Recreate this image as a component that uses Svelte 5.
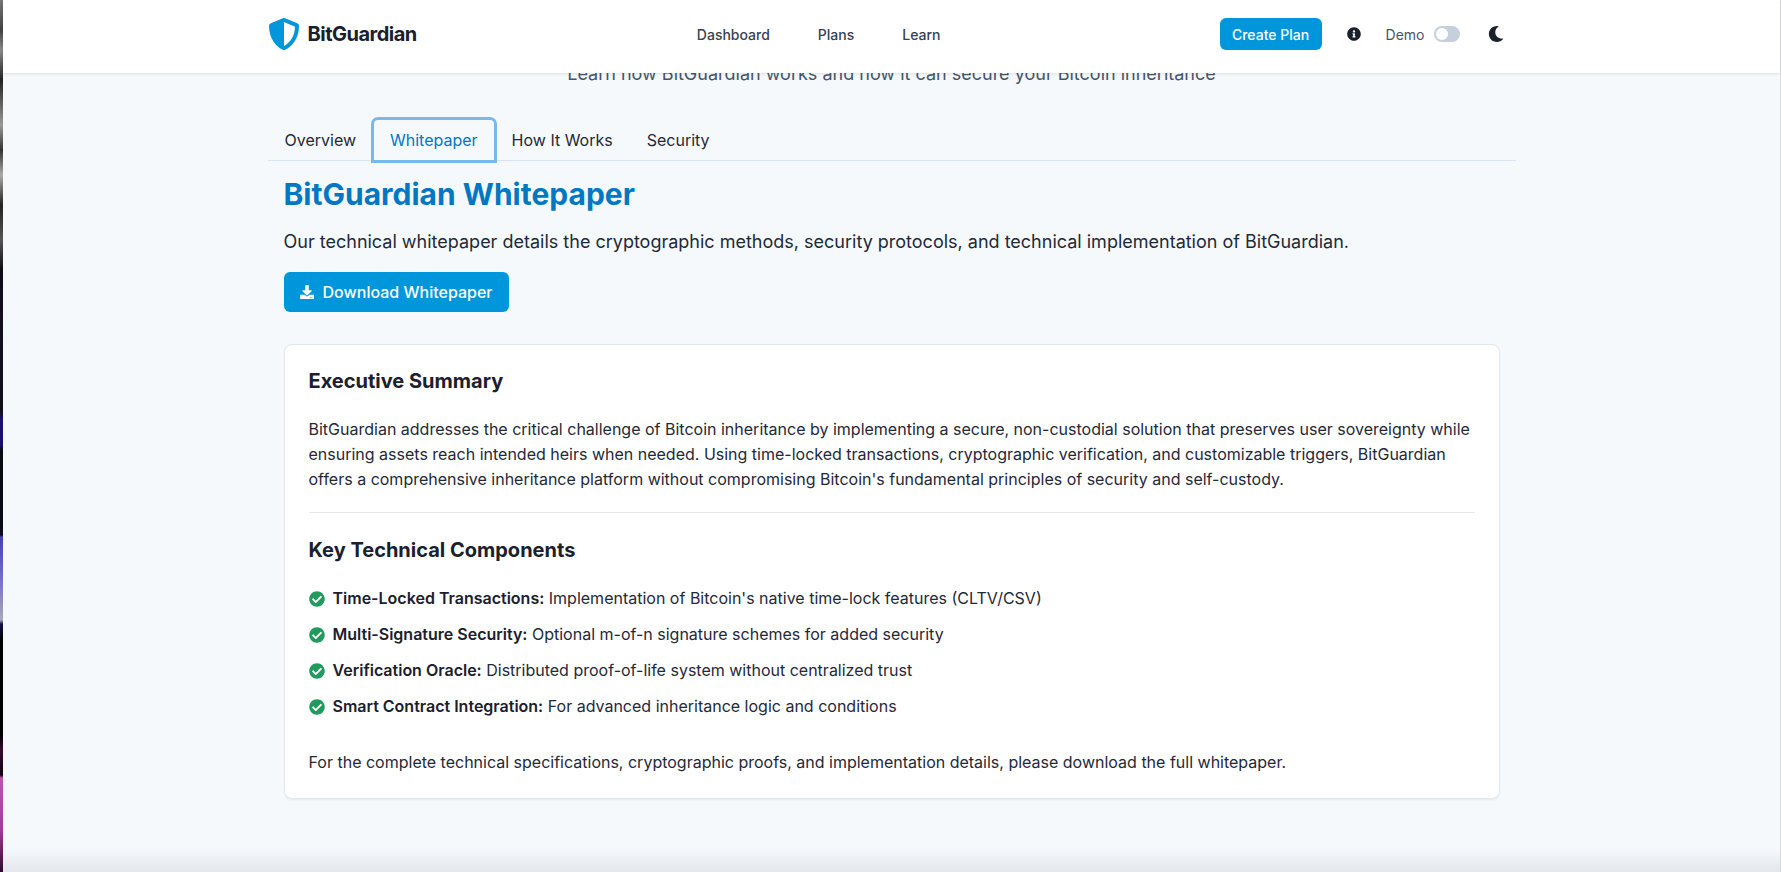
<script>
  const items = [
    ['Time-Locked Transactions:', "Implementation of Bitcoin's native time-lock features (CLTV/CSV)"],
    ['Multi-Signature Security:', 'Optional m-of-n signature schemes for added security'],
    ['Verification Oracle:', 'Distributed proof-of-life system without centralized trust'],
    ['Smart Contract Integration:', 'For advanced inheritance logic and conditions']
  ];
  const tabs = ['Overview', 'Whitepaper', 'How It Works', 'Security'];
</script>

<div class="window">
  <div class="desk-left"></div>
  <div class="page">
    <header>
      <div class="bar">
        <div class="brand">
          <svg class="shield" viewBox="0 0 512 512"><path d="M466.5 83.7l-192-80a48.15 48.15 0 0 0-36.9 0l-192 80C27.7 91.1 16 108.6 16 128c0 198.5 114.5 335.7 221.5 380.3 11.8 4.9 25.1 4.9 36.9 0C360.1 472.6 496 349.3 496 128c0-19.4-11.7-36.9-29.5-44.3zM256.1 446.3l-.1-381 175.9 73.3c-3.3 151.4-82.1 261.1-175.8 307.7z"/></svg>
          <span>BitGuardian</span>
        </div>
        <nav>
          <span>Dashboard</span>
          <span>Plans</span>
          <span>Learn</span>
        </nav>
        <div class="actions">
          <button class="create">Create Plan</button>
          <svg class="info" viewBox="0 0 512 512"><path d="M256 8C119.043 8 8 119.083 8 256c0 136.997 111.043 248 248 248s248-111.003 248-248C504 119.083 392.957 8 256 8zm0 110c23.196 0 42 18.804 42 42s-18.804 42-42 42-42-18.804-42-42 18.804-42 42-42zm56 254c0 6.627-5.373 12-12 12h-88c-6.627 0-12-5.373-12-12v-24c0-6.627 5.373-12 12-12h12v-64h-12c-6.627 0-12-5.373-12-12v-24c0-6.627 5.373-12 12-12h64c6.627 0 12 5.373 12 12v100h12c6.627 0 12 5.373 12 12v24z"/></svg>
          <div class="demo">
            <span>Demo</span>
            <span class="toggle"><span class="knob"></span></span>
          </div>
          <svg class="moon" viewBox="0 0 512 512"><path d="M283.211 512c78.962 0 151.079-35.925 198.857-94.792 7.068-8.708-.639-21.43-11.562-19.35-124.203 23.654-238.262-71.576-238.262-196.954 0-72.222 38.662-138.635 101.498-174.394 9.686-5.512 7.25-20.197-3.756-22.23A258.156 258.156 0 0 0 283.211 0c-141.309 0-256 114.511-256 256 0 141.309 114.511 256 256 256z"/></svg>
        </div>
      </div>
    </header>

    <main>
      <p class="lead">Learn how BitGuardian works and how it can secure your Bitcoin inheritance</p>
      <div class="tabs">
        {#each tabs as t, i}
          <button class="tab" class:active={i === 1}>{t}</button>
        {/each}
      </div>
      <section>
        <h1>BitGuardian Whitepaper</h1>
        <p class="intro">Our technical whitepaper details the cryptographic methods, security protocols, and technical implementation of BitGuardian.</p>
        <button class="download">
          <svg viewBox="0 0 512 512"><path d="M216 0h80c13.3 0 24 10.7 24 24v168h87.7c17.8 0 26.7 21.5 14.1 34.1L269.7 378.3c-7.5 7.5-19.8 7.5-27.3 0L90.1 226.1c-12.6-12.6-3.7-34.1 14.1-34.1H192V24c0-13.3 10.7-24 24-24zm296 376v112c0 13.3-10.7 24-24 24H24c-13.3 0-24-10.7-24-24V376c0-13.3 10.7-24 24-24h146.7l49 49c20.1 20.1 52.5 20.1 72.6 0l49-49H488c13.3 0 24 10.7 24 24zm-124 88c0-11-9-20-20-20s-20 9-20 20 9 20 20 20 20-9 20-20zm64 0c0-11-9-20-20-20s-20 9-20 20 9 20 20 20 20-9 20-20z"/></svg>
          <span>Download Whitepaper</span>
        </button>
        <div class="card">
          <h2>Executive Summary</h2>
          <p class="summary">BitGuardian addresses the critical challenge of Bitcoin inheritance by implementing a secure, non-custodial solution that preserves user sovereignty while ensuring assets reach intended heirs when needed. Using time-locked transactions, cryptographic verification, and customizable triggers, BitGuardian offers a comprehensive inheritance platform without compromising Bitcoin's fundamental principles of security and self-custody.</p>
          <hr />
          <h2>Key Technical Components</h2>
          <ul>
            {#each items as [label, text]}
              <li>
                <svg viewBox="0 0 512 512"><path d="M504 256c0 136.967-111.033 248-248 248S8 392.967 8 256 119.033 8 256 8s248 111.033 248 248zM227.314 387.314l184-184c6.248-6.248 6.248-16.379 0-22.627l-22.627-22.627c-6.248-6.249-16.379-6.249-22.628 0L216 308.118l-70.059-70.059c-6.248-6.248-16.379-6.248-22.628 0l-22.627 22.627c-6.248 6.248-6.248 16.379 0 22.627l104 104c6.249 6.249 16.379 6.249 22.628.001z"/></svg>
                <span><strong>{label}</strong> {text}</span>
              </li>
            {/each}
          </ul>
          <p class="closing">For the complete technical specifications, cryptographic proofs, and implementation details, please download the full whitepaper.</p>
        </div>
      </section>
    </main>
    <div class="fade"></div>
  </div>
  <div class="desk-right"></div>
</div>

<style>
  :global(body) {
    margin: 0;
    background: #0a0a14;
    font-family: Inter, "Liberation Sans", sans-serif;
    overflow: hidden;
  }
  .window {
    display: flex;
    height: 872px;
    overflow: hidden;
  }
  .desk-left {
    width: 3px;
    flex: none;
    background: linear-gradient(to bottom,
      #777 0, #444 30px, #8a8a8a 50px, #222 80px, #999 125px, #333 150px, #aaa 175px, #222 205px, #555 240px,
      #0c0c14 270px, #141020 320px, #101018 410px, #1a1068 420px, #1a1068 445px, #0b0b12 450px, #0b0b18 535px,
      #4a40b8 537px, #6a63c8 570px, #a8a8b8 620px, #15104a 624px,
      #000 640px, #000 735px, #3a0a30 750px, #14050f 775px, #b858b0 778px, #a03c98 830px, #300a2c 872px);
  }
  .desk-right { width: 1px; flex: none; background: #d8dade; }
  .page {
    flex: 1;
    min-width: 0;
    position: relative;
    background: #f5f9fc;
    display: flex;
    flex-direction: column;
  }
  header {
    height: 73px;
    flex: none;
    background: #fff;
    box-shadow: 0 1px 3px rgba(15, 23, 42, 0.1);
    position: relative;
    z-index: 2;
  }
  .bar {
    width: 1248px;
    height: 68px;
    margin: 0 auto;
    display: flex;
    align-items: center;
    justify-content: space-between;
  }
  .brand {
    display: flex;
    align-items: center;
    gap: 8px;
    font-size: 20px;
    font-weight: 700;
    color: #1a202c;
    letter-spacing: -0.5px;
  }
  .shield { width: 32px; height: 32px; fill: #0096dc; }
  nav {
    display: flex;
    gap: 48px;
    font-size: 14px;
    font-weight: 500;
    color: #374151;
    padding-left: 1px;
  }
  .actions { display: flex; align-items: center; padding-right: 11px; }
  .create {
    width: 102px;
    height: 32px;
    border: 0;
    border-radius: 6px;
    background: #0096dc;
    color: #fff;
    font: 500 14px Inter, sans-serif;
    padding: 0;
  }
  .info { width: 14px; height: 14px; fill: #1a202c; margin-left: 25px; }
  .demo {
    display: flex;
    align-items: center;
    gap: 10px;
    margin-left: 25px;
    font-size: 14px;
    font-weight: 400;
    color: #475569;
  }
  .toggle {
    width: 26px;
    height: 16px;
    border-radius: 8px;
    background: #c6d0dc;
    display: flex;
    align-items: center;
    padding-left: 2px;
    box-sizing: border-box;
  }
  .knob { width: 12px; height: 12px; border-radius: 50%; background: #fff; }
  .moon { width: 16px; height: 16px; fill: #1a202c; margin-left: 28px; }

  main {
    width: 1248px;
    margin: -13px auto 0;
  }
  .lead {
    margin: 0;
    height: 28px;
    line-height: 28px;
    text-align: center;
    font-size: 18px;
    color: #475569;
  }
  .tabs {
    display: flex;
    align-items: flex-end;
    gap: 2px;
    margin-top: 28px;
    height: 44px;
    padding-left: 1px;
    border-bottom: 1px solid #d8e4f2;
  }
  .tab {
    height: 40px;
    padding: 0 16px;
    border: 0;
    border-radius: 4px 4px 0 0;
    background: none;
    font: 400 16px Inter, sans-serif;
    color: #1f2937;
  }
  .tab.active {
    color: #0277c4;
    outline: 3px solid #7ab8ea;
    outline-offset: 0;
  }
  section { padding: 0 16px; }
  h1 {
    margin: 15px 0 0;
    font-size: 30px;
    line-height: 36px;
    font-weight: 700;
    color: #0277c2;
  }
  .intro {
    margin: 16px 0 0;
    font-size: 18px;
    line-height: 28px;
    color: #1f2937;
  }
  .download {
    display: flex;
    align-items: center;
    gap: 9px;
    width: 225px;
    height: 40px;
    margin-top: 16px;
    border: 0;
    border-radius: 6px;
    background: #0096dc;
    color: #fff;
    font: 500 16px Inter, sans-serif;
    padding: 0 16px;
    white-space: nowrap;
  }
  .download svg { width: 16px; height: 16px; fill: #fff; }
  .card {
    margin-top: 32px;
    height: 455px;
    box-sizing: border-box;
    padding: 24px;
    background: #fff;
    border: 1px solid #e2e8f0;
    border-radius: 8px;
    box-shadow: 0 1px 2px rgba(15, 23, 42, 0.06);
    color: #1f2937;
  }
  h2 {
    margin: 0;
    font-size: 20px;
    line-height: 24px;
    font-weight: 700;
    color: #1a202c;
  }
  .summary {
    margin: 24px 0 0;
    font-size: 16px;
    line-height: 25px;
  }
  hr {
    border: 0;
    border-top: 1px solid #e5e7eb;
    margin: 20px 0 25px;
  }
  ul {
    list-style: none;
    margin: 24px 0 0;
    padding: 0;
    display: flex;
    flex-direction: column;
    gap: 12px;
  }
  li {
    display: flex;
    align-items: center;
    gap: 8px;
    font-size: 16px;
    line-height: 24px;
  }
  li svg { width: 16px; height: 16px; fill: #219a5e; flex: none; margin-top: 1px; }
  strong { font-weight: 600; color: #1a202c; }
  .closing {
    margin: 32px 0 0;
    font-size: 16px;
    line-height: 24px;
  }
  .fade {
    position: absolute;
    left: 0;
    right: 0;
    bottom: 0;
    height: 24px;
    background: linear-gradient(to bottom, rgba(200, 205, 212, 0), rgba(200, 205, 212, 0.4));
    pointer-events: none;
  }
</style>
